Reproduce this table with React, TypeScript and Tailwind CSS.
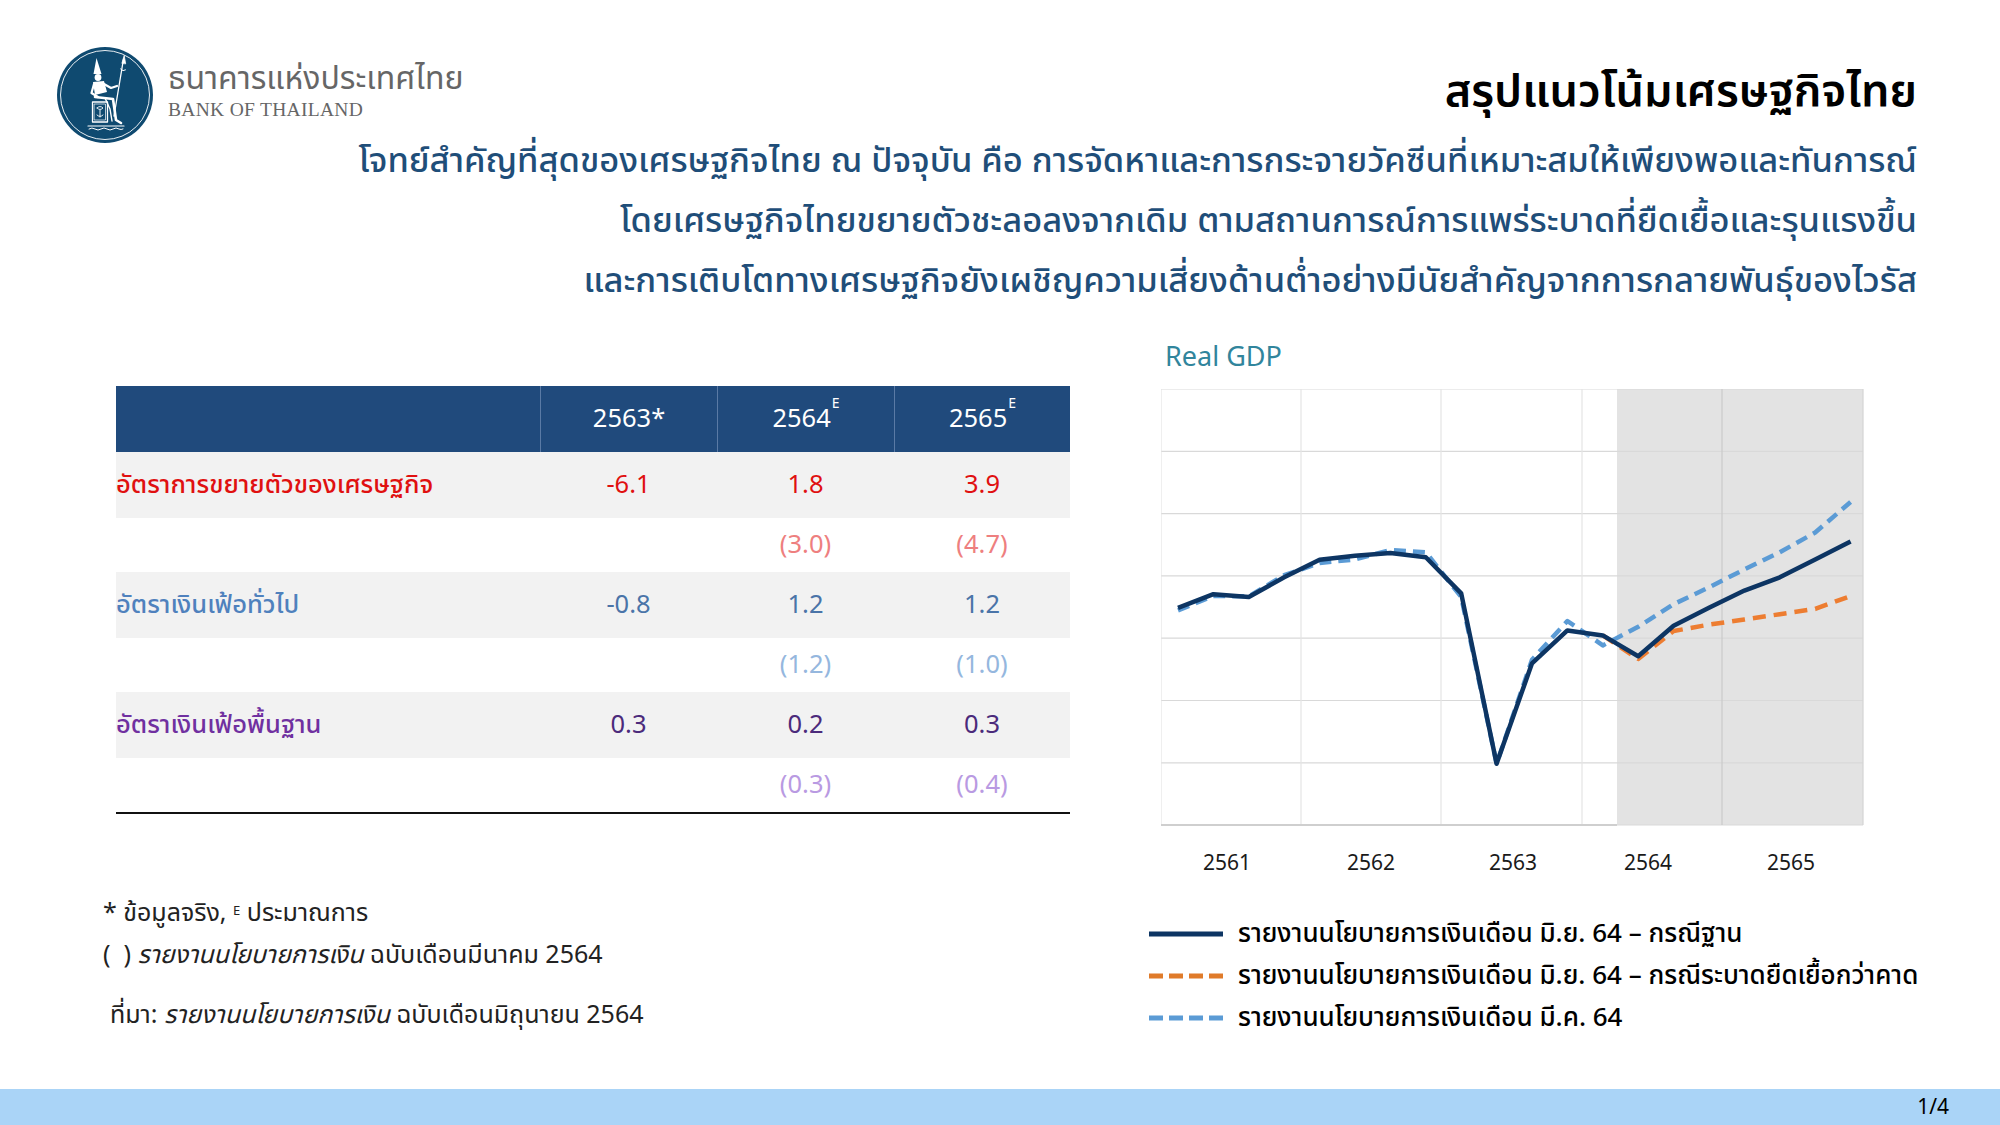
import React from 'react';

const thai = "font-['Noto_Sans_Thai','Noto_Sans','Liberation_Sans',sans-serif]";

// quarterly points, x = 17 + 35.4 * i
const px = (i: number) => 17 + 35.4 * i;
const baseCase = [218.8, 205.2, 208, 188.3, 170.7, 166.8, 163.9, 168.2, 204.4, 374.7, 274.3, 241.4, 246.4, 267.2, 236.7, 218.8, 201.6, 188.3, 170.4, 152.5];
const marchCase = [221.3, 207, 207.3, 186.2, 174, 170.4, 161, 163.2, 208, 374.7, 270.7, 232, 256.4, 237.8, 215.2, 198.3, 180.4, 163.2, 143.5, 113];
const badCase: [number, number][] = [[12, 246.4], [13, 270], [14, 242], [15, 235.6], [16, 230.6], [17, 225.2], [18, 219.9], [19, 207]];

const toPath = (ys: number[]) => ys.map((y, i) => `${i === 0 ? 'M' : 'L'}${px(i).toFixed(1)},${y}`).join(' ');
const badPath = badCase.map(([i, y], k) => `${k === 0 ? 'M' : 'L'}${px(i).toFixed(1)},${y}`).join(' ');

function Logo() {
    return (
        <svg viewBox="0 0 96 96" className="w-[96px] h-[96px] shrink-0">
            <circle cx="48" cy="48" r="48" fill="#0f4a70" />
            <circle cx="48" cy="48" r="44.5" fill="none" stroke="#fff" strokeWidth="0.9" />
            {/* crown + head */}
            <path d="M39.5 11 L44.5 27 L36.5 27 Z" fill="#fff" />
            <circle cx="41" cy="30.5" r="3.4" fill="#fff" />
            {/* torso */}
            <path d="M36 35 L47 34 L50 45 L38 48 Z" fill="#fff" />
            <g fill="none" stroke="#fff" strokeLinecap="round" strokeLinejoin="round">
                {/* spear */}
                <path d="M66.5 12 L57 69" strokeWidth="1.3" />
                <path d="M65 16 L67.2 8.5 L68.6 16.5 Z" fill="#fff" strokeWidth="0.8" />
                <path d="M63.5 22 Q66 25 68.5 23" strokeWidth="1" />
                {/* arms */}
                <path d="M47 37 L54 41 L60 39" strokeWidth="2.2" />
                <path d="M37 37 L34.5 46 L41 50" strokeWidth="2.2" />
                {/* legs */}
                <path d="M38 50 L56 52 L59 73 L64 76" strokeWidth="2.6" />
                <path d="M48 51 L53 62 L55 74" strokeWidth="1.4" />
                {/* seat with emblem */}
                <rect x="35.5" y="55" width="15" height="20" strokeWidth="1.3" />
                <rect x="37.5" y="57" width="11" height="16" strokeWidth="0.7" />
                <path d="M40 61 Q43 58 46 61 Q43 64 40 61 M43 63 L43 70 M40 68 Q43 71 46 68" strokeWidth="0.9" />
                {/* base band */}
                <path d="M31 79 L67 79" strokeWidth="1.2" />
                <path d="M32 82 Q35 80 38 82 Q41 84 44 82 Q47 80 50 82 Q53 84 56 82 Q59 80 62 82 Q64 83 66 82" strokeWidth="1" />
            </g>
        </svg>
    );
}

function GdpChart() {
    const hLines = [0, 62.3, 124.6, 186.9, 249.2, 311.5, 373.8, 436];
    const vLines = [140, 280, 421, 561];
    return (
        <svg viewBox="0 0 720 490" className="w-[720px] h-[490px]">
            <rect x="0" y="0" width="702" height="436" fill="#fff" />
            <rect x="456" y="0" width="246" height="436" fill="#e3e3e3" />
            {hLines.map((y) => (
                <line key={y} x1="0" x2="702" y1={y} y2={y} stroke="#d9d9d9" strokeWidth="1.2" />
            ))}
            {vLines.map((x) => (
                <line key={x} x1={x} x2={x} y1="0" y2="436" stroke={x > 456 ? '#cacaca' : '#e4e4e4'} strokeWidth="1.2" />
            ))}
            <line x1="0" x2="0" y1="0" y2="436" stroke="#e4e4e4" strokeWidth="1.2" />
            <line x1="702" x2="702" y1="0" y2="436" stroke="#d4d4d4" strokeWidth="1.2" />
            <line x1="0" x2="456" y1="436" y2="436" stroke="#cfcfcf" strokeWidth="2" />

            <path d={toPath(marchCase)} fill="none" stroke="#5b9bd5" strokeWidth="4.5" strokeDasharray="12 7" strokeLinejoin="round" />
            <path d={badPath} fill="none" stroke="#ed7d31" strokeWidth="4.5" strokeDasharray="13 8" strokeLinejoin="round" />
            <path d={toPath(baseCase)} fill="none" stroke="#0d3563" strokeWidth="4.5" strokeLinejoin="round" />

            <g fontFamily="'Noto Sans','Liberation Sans',sans-serif" fontSize="21" fill="#1a1a1a" textAnchor="middle">
                <text x="66" y="481">2561</text>
                <text x="210" y="481">2562</text>
                <text x="352" y="481">2563</text>
                <text x="487" y="481">2564</text>
                <text x="630" y="481">2565</text>
            </g>
        </svg>
    );
}

const rows = [
    { label: 'อัตราการขยายตัวของเศรษฐกิจ', labelCls: 'text-[#e01010]', valCls: 'text-[#e01010]', vals: ['-6.1', '1.8', '3.9'], prev: ['(3.0)', '(4.7)'], prevCls: 'text-[#ee7f7f]' },
    { label: 'อัตราเงินเฟ้อทั่วไป', labelCls: 'text-[#4f81bd]', valCls: 'text-[#4a74a8]', vals: ['-0.8', '1.2', '1.2'], prev: ['(1.2)', '(1.0)'], prevCls: 'text-[#95b7de]' },
    { label: 'อัตราเงินเฟ้อพื้นฐาน', labelCls: 'text-[#7030a0]', valCls: 'text-[#4b2a7b]', vals: ['0.3', '0.2', '0.3'], prev: ['(0.3)', '(0.4)'], prevCls: 'text-[#b99ae2]' },
];

function ForecastTable() {
    return (
        <div className={`w-[954px] ${thai} text-[25.5px]`}>
            <div className="grid grid-cols-[424px_177px_177px_176px] h-[66px] bg-[#204a7c] text-white">
                <div />
                {['2563*', '2564', '2565'].map((y, i) => (
                    <div key={y} className="flex items-center justify-center border-l border-[#5a7aa5]">
                        {y}
                        {i > 0 && <sup className="text-[14px] -mt-4 ml-px">E</sup>}
                    </div>
                ))}
            </div>
            {rows.map((r) => (
                <React.Fragment key={r.label}>
                    <div className="grid grid-cols-[424px_177px_177px_176px] h-[66px] bg-[#f2f2f2] items-center">
                        <div className={`${r.labelCls} font-medium`}>{r.label}</div>
                        {r.vals.map((v, i) => (
                            <div key={i} className={`text-center ${r.valCls}`}>{v}</div>
                        ))}
                    </div>
                    <div className="grid grid-cols-[424px_177px_177px_176px] h-[54px] items-center">
                        <div />
                        <div />
                        {r.prev.map((v, i) => (
                            <div key={i} className={`text-center ${r.prevCls}`}>{v}</div>
                        ))}
                    </div>
                </React.Fragment>
            ))}
            <div className="h-[2px] bg-[#111]" />
        </div>
    );
}

function LegendRow({ color, dashed, text }: { color: string; dashed?: boolean; text: string }) {
    return (
        <div className="flex items-center gap-[15px] h-[42px]">
            <svg viewBox="0 0 74 6" className="w-[74px] h-[6px]">
                <line x1="0" x2="74" y1="3" y2="3" stroke={color} strokeWidth="5" strokeDasharray={dashed ? '14 6' : undefined} />
            </svg>
            <span className="whitespace-nowrap">{text}</span>
        </div>
    );
}

export default function App() {
    return (
        <div className="w-[2000px] h-[1125px] bg-white flex flex-col overflow-hidden">
            <header className="flex justify-between items-start pl-[57px] pr-[83px] pt-[47px]">
                <div className="flex items-center gap-[15px]">
                    <Logo />
                    <div className="flex flex-col -mt-[8px] whitespace-nowrap">
                        <span className={`${thai} text-[32px] leading-[37px] text-[#666]`}>ธนาคารแห่งประเทศไทย</span>
                        <span className="font-['Liberation_Serif',serif] text-[19.5px] leading-[22px] text-[#666] tracking-[0.3px] mt-[1px]">BANK OF THAILAND</span>
                    </div>
                </div>
                <h1 className={`${thai} whitespace-nowrap text-[45px] leading-[58px] font-semibold text-black mt-[16px]`}>สรุปแนวโน้มเศรษฐกิจไทย</h1>
            </header>
            <div className={`${thai} -mt-[11px] pr-[83px] text-right whitespace-nowrap text-[34.5px] leading-[60px] text-[#1f4e79] font-medium`}>
                <p>โจทย์สำคัญที่สุดของเศรษฐกิจไทย ณ ปัจจุบัน คือ การจัดหาและการกระจายวัคซีนที่เหมาะสมให้เพียงพอและทันการณ์</p>
                <p>โดยเศรษฐกิจไทยขยายตัวชะลอลงจากเดิม ตามสถานการณ์การแพร่ระบาดที่ยืดเยื้อและรุนแรงขึ้น</p>
                <p>และการเติบโตทางเศรษฐกิจยังเผชิญความเสี่ยงด้านต่ำอย่างมีนัยสำคัญจากการกลายพันธุ์ของไวรัส</p>
            </div>

            <main className="flex flex-1">
                <div className="pl-[116px] pt-[74px] flex flex-col">
                    <ForecastTable />
                    <div className={`${thai} text-[25px] text-[#222] mt-[78px] -ml-[13px] leading-[42px]`}>
                        <p>* ข้อมูลจริง, <sup className="text-[13px]">E</sup> ประมาณการ</p>
                        <p>(&nbsp;&nbsp;) <i>รายงานนโยบายการเงิน</i> ฉบับเดือนมีนาคม 2564</p>
                        <p className="mt-[18px] ml-[7px]">ที่มา: <i>รายงานนโยบายการเงิน</i> ฉบับเดือนมิถุนายน 2564</p>
                    </div>
                </div>
                <div className="ml-[79px] pt-[29px] flex flex-col">
                    <div className={`${thai} text-[27px] leading-[34px] text-[#31859c] ml-[16px] mb-[14px]`}>Real GDP</div>
                    <div className="ml-[12px]">
                        <GdpChart />
                    </div>
                    <div className={`${thai} text-[26px] font-medium text-black mt-[34px]`}>
                        <LegendRow color="#0d3563" text="รายงานนโยบายการเงินเดือน มิ.ย. 64 – กรณีฐาน" />
                        <LegendRow color="#e07b2a" dashed text="รายงานนโยบายการเงินเดือน มิ.ย. 64 – กรณีระบาดยืดเยื้อกว่าคาด" />
                        <LegendRow color="#5b9bd5" dashed text="รายงานนโยบายการเงินเดือน มี.ค. 64" />
                    </div>
                </div>
            </main>

            <footer className="h-[36px] bg-[#aad4f7] flex items-center justify-end pr-[51px] font-['Noto_Sans','Liberation_Sans',sans-serif] text-[21px] text-black">
                1/4
            </footer>
        </div>
    );
}
